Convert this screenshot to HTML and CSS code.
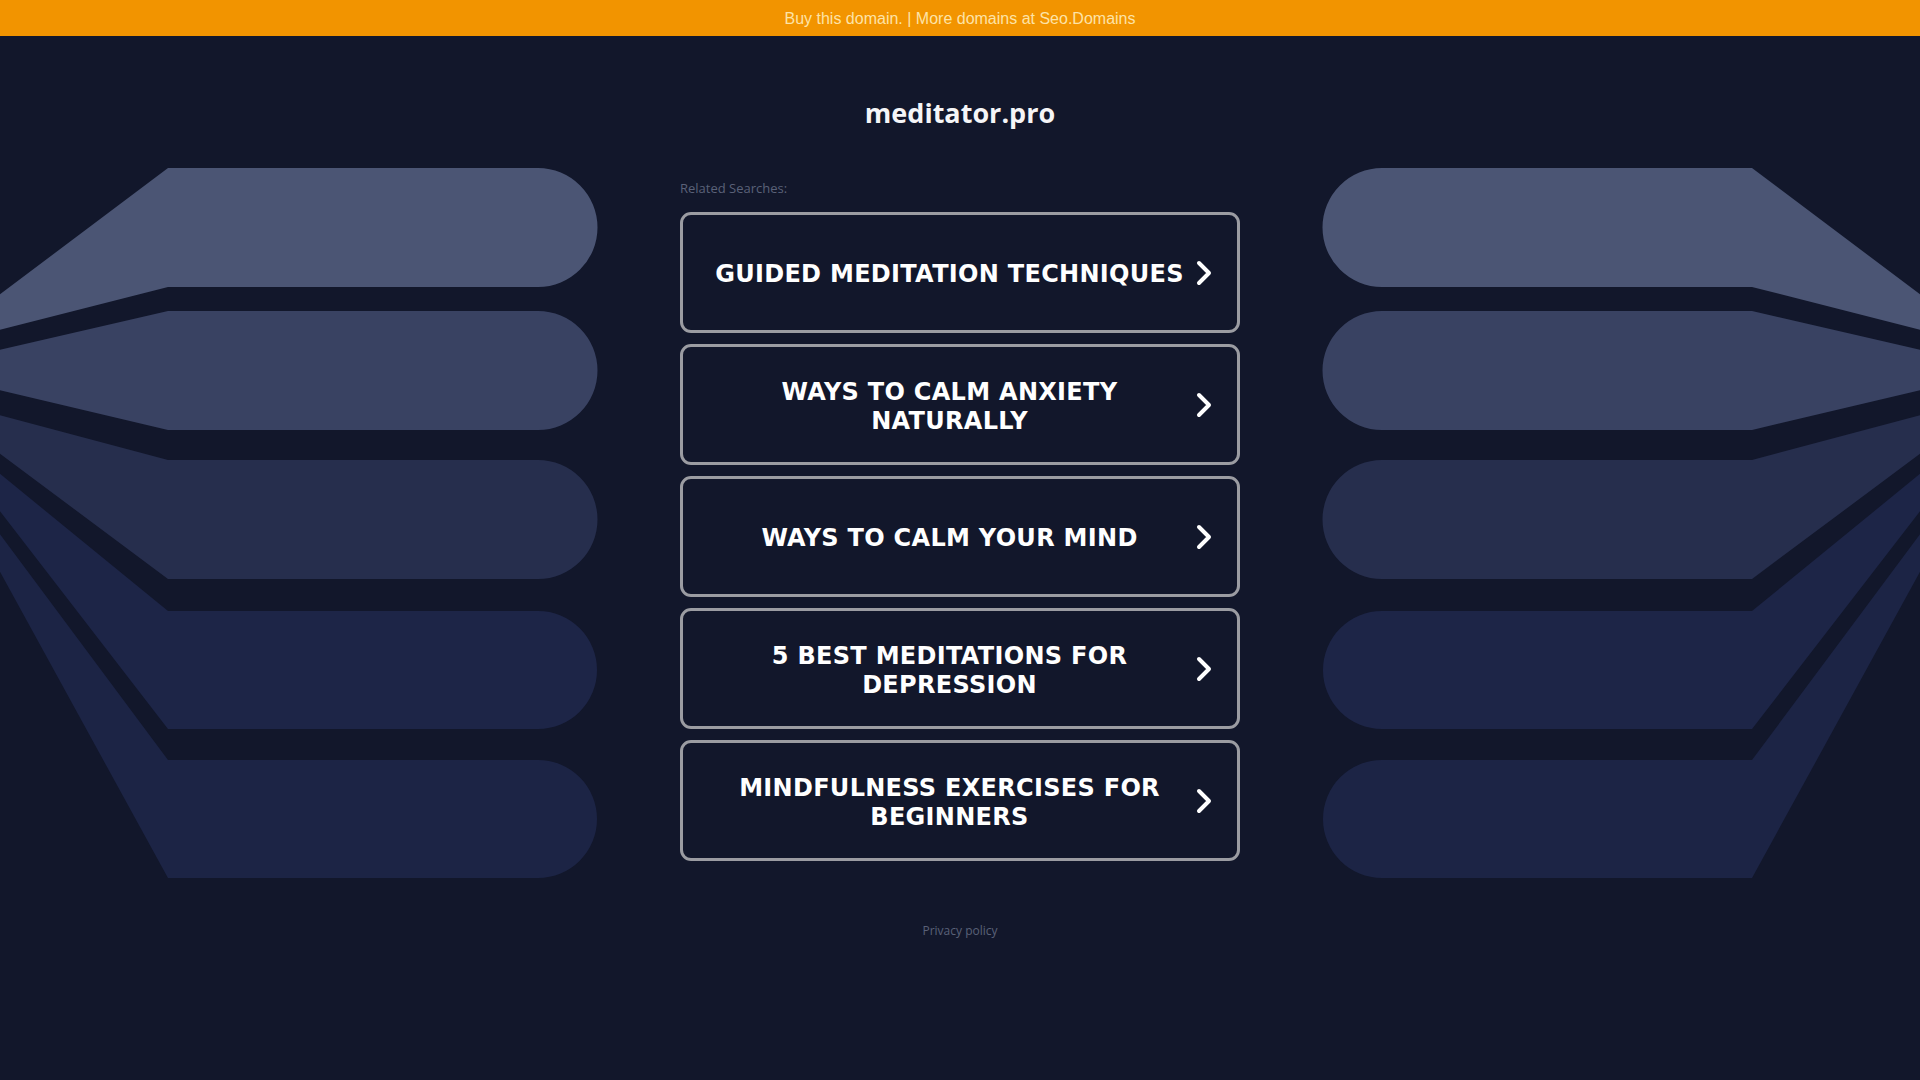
FILE: index.html
```html
<!DOCTYPE html>
<html lang="en">
<head>
    <meta charset="UTF-8">
    <meta name="viewport" content="width=device-width, initial-scale=1.0">
    <title>meditator.pro</title>
    <link rel="stylesheet" href="styles.css">
</head>
<body>
    <!-- Pasek sprzedaży domeny -->
    <div class="topbar">
        <a href="#">Buy this domain.</a> | <a href="#">More domains at Seo.Domains</a>
    </div>

    <div class="page">
        <!-- Dekoracja po lewej -->
        <svg class="fan" width="680" height="880" viewBox="0 36 680 880">
            <path fill="#4b5574" d="M-1,295 L168,168 H538 A59.5,59.5 0 0 1 538,287 H168 L-1,330 Z"/>
            <path fill="#394262" d="M-1,350 L168,311 H538 A59.5,59.5 0 0 1 538,430 H168 L-1,390 Z"/>
            <path fill="#262e4d" d="M-1,415 L168,460 H538 A59.5,59.5 0 0 1 538,579 H168 L-1,453 Z"/>
            <path fill="#1d2547" d="M-1,473 L168,611 H538 A59,59 0 0 1 538,729 H168 L-1,510 Z"/>
            <path fill="#1c2445" d="M-1,533 L168,760 H538 A59,59 0 0 1 538,878 H168 L-1,570 Z"/>
        </svg>

        <div class="content">
            <h1 class="domain">meditator.pro</h1>
            <div class="related">Related Searches:</div>

            <div class="links">
                <a class="link" href="#">
                    <span class="link-text">Guided Meditation Techniques</span>
                    <svg class="chevron" width="16" height="26" viewBox="0 0 16 26"><polyline points="3,3 13,13 3,23"/></svg>
                </a>
                <a class="link" href="#">
                    <span class="link-text">Ways to Calm Anxiety Naturally</span>
                    <svg class="chevron" width="16" height="26" viewBox="0 0 16 26"><polyline points="3,3 13,13 3,23"/></svg>
                </a>
                <a class="link" href="#">
                    <span class="link-text">Ways to Calm Your Mind</span>
                    <svg class="chevron" width="16" height="26" viewBox="0 0 16 26"><polyline points="3,3 13,13 3,23"/></svg>
                </a>
                <a class="link" href="#">
                    <span class="link-text">5 Best Meditations for Depression</span>
                    <svg class="chevron" width="16" height="26" viewBox="0 0 16 26"><polyline points="3,3 13,13 3,23"/></svg>
                </a>
                <a class="link" href="#">
                    <span class="link-text">Mindfulness Exercises for Beginners</span>
                    <svg class="chevron" width="16" height="26" viewBox="0 0 16 26"><polyline points="3,3 13,13 3,23"/></svg>
                </a>
            </div>

            <div class="footer"><a href="#">Privacy policy</a></div>
        </div>

        <!-- Ta sama dekoracja, odbita w poziomie -->
        <svg class="fan fan-right" width="680" height="880" viewBox="0 36 680 880">
            <path fill="#4b5574" d="M-1,295 L168,168 H538 A59.5,59.5 0 0 1 538,287 H168 L-1,330 Z"/>
            <path fill="#394262" d="M-1,350 L168,311 H538 A59.5,59.5 0 0 1 538,430 H168 L-1,390 Z"/>
            <path fill="#262e4d" d="M-1,415 L168,460 H538 A59.5,59.5 0 0 1 538,579 H168 L-1,453 Z"/>
            <path fill="#1d2547" d="M-1,473 L168,611 H538 A59,59 0 0 1 538,729 H168 L-1,510 Z"/>
            <path fill="#1c2445" d="M-1,533 L168,760 H538 A59,59 0 0 1 538,878 H168 L-1,570 Z"/>
        </svg>
    </div>
</body>
</html>
```

FILE: styles.css
```css
/* Globalne style */
body {
    margin: 0;
    background-color: #12172b;
    color: #fff;
    font-family: 'Open Sans', sans-serif;
    overflow: hidden;
}
a {
    color: inherit;
    text-decoration: none;
}
/* Pasek na górze */
.topbar {
    height: 36px;
    line-height: 38px;
    overflow: hidden;
    background-color: #f29400;
    color: #fde3a7;
    font-family: 'Liberation Sans', Arial, sans-serif;
    font-size: 16px;
    text-align: center;
}
/* Układ: dekoracja | treść | dekoracja */
.page {
    display: grid;
    grid-template-columns: 1fr 560px 1fr;
}
.fan {
    display: block;
}
.fan-right {
    transform: scaleX(-1);
}
.content {
    display: flex;
    flex-direction: column;
}
.domain {
    margin: 57px 0 0;
    height: 40px;
    line-height: 40px;
    font-size: 27px;
    font-weight: 700;
    text-align: center;
    color: #f5f5f7;
}
.related {
    margin-top: 47px;
    height: 16px;
    line-height: 16px;
    font-size: 13px;
    color: #5a6178;
}
.links {
    margin-top: 16px;
    display: flex;
    flex-direction: column;
    gap: 11px;
}
.link {
    height: 121px;
    box-sizing: border-box;
    border: 3px solid #9b9ca2;
    border-radius: 11px;
    display: flex;
    align-items: center;
    padding: 4px 25px 0 26px;
    gap: 6px;
}
.link-text {
    flex: 1;
    text-align: center;
    text-transform: uppercase;
    font-family: 'DejaVu Sans', Verdana, sans-serif;
    font-weight: 700;
    font-size: 24px;
    line-height: 29px;
    letter-spacing: 0.3px;
    color: #fff;
}
.chevron {
    flex: none;
    margin-top: -3px;
}
.chevron polyline {
    fill: none;
    stroke: #fff;
    stroke-width: 4;
    stroke-linecap: round;
    stroke-linejoin: round;
}
.footer {
    margin-top: 62px;
    height: 16px;
    line-height: 16px;
    font-size: 12px;
    text-align: center;
    color: #5a6178;
}
```
